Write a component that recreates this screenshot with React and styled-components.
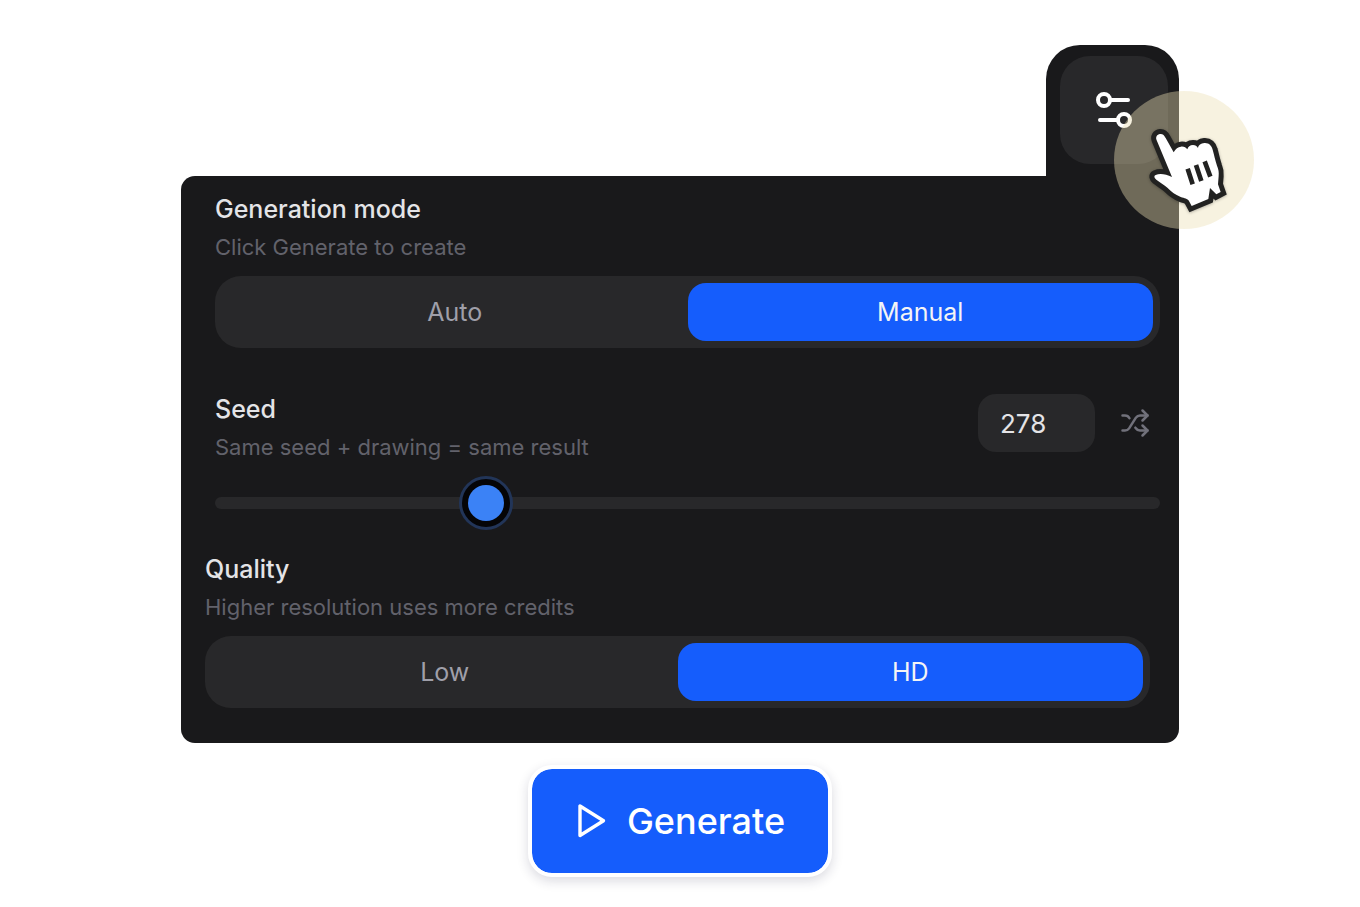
import React, { useState } from 'react';
import styled, { createGlobalStyle } from 'styled-components';
import { Shuffle } from 'lucide-react';

const GlobalStyle = createGlobalStyle`
  :root {
    --panel: #19191b;
    --field: #28282a;
    --blue: #155dfc;
    --text: #e4e4e7;
    --text-soft: #9f9fa9;
    --text-dim: #62626b;
  }
  *, *::before, *::after {
    box-sizing: border-box;
  }
  body {
    margin: 0;
    background: #fff;
    font-family: Inter, 'Liberation Sans', sans-serif;
  }
  button, input {
    font-family: inherit;
  }
`;

const PageStyles = styled.main`
  display: flex;
  flex-direction: column;
  align-items: center;
  padding: 45px 24px 30px;
`;

const SettingsStyles = styled.div`
  display: flex;
  flex-direction: column;
  width: 100%;
  max-width: 998px;
`;

const SettingsTab = styled.div`
  position: relative;
  z-index: 1;
  align-self: flex-end;
  padding: 11px 11px 12px 14px;
  border-radius: 34px 34px 0 0;
  background: var(--panel);
`;

const TabButton = styled.button`
  display: flex;
  align-items: center;
  justify-content: center;
  width: 108px;
  height: 108px;
  padding: 0;
  border: none;
  border-radius: 30px;
  background: var(--field);
  color: #fff;
  cursor: pointer;
`;

// sits over the tab, the panel and the page
const Pointer = styled.svg`
  position: absolute;
  top: 46px;
  left: 68px;
  width: 140px;
  height: 138px;
  pointer-events: none;
  overflow: visible;
  .hand {
    filter: drop-shadow(0 2px 5px rgba(0, 0, 0, 0.3));
  }
`;

const Panel = styled.section`
  display: flex;
  flex-direction: column;
  padding: 16px 19px 35px 34px;
  border-radius: 14px 0 14px 14px;
  background: var(--panel);
`;

const Group = styled.div`
  display: flex;
  flex-direction: column;
  gap: 14px;
  min-width: 0;
  margin: ${({ $outset }) => ($outset ? '0 10px 0 -10px' : '0')};
  padding-bottom: ${({ $space = 0 }) => $space}px;
`;

const Heading = styled.div`
  display: flex;
  flex-direction: column;
  gap: 6px;
  flex: 1;
`;

const Title = styled.span`
  font-size: 25px;
  font-weight: 500;
  line-height: 34px;
  color: var(--text);
`;

const Hint = styled.span`
  font-size: 22px;
  line-height: 30px;
  color: var(--text-dim);
`;

const Segments = styled.div`
  display: grid;
  grid-template-columns: 1fr 1fr;
  height: 72px;
  padding: 7px;
  border-radius: 26px;
  background: var(--field);
`;

const Segment = styled.label`
  position: relative;
  display: flex;
  align-items: center;
  justify-content: center;
  border-radius: 18px;
  font-size: 25px;
  color: var(--text-soft);
  cursor: pointer;
  input {
    position: absolute;
    inset: 0;
    margin: 0;
    opacity: 0;
    cursor: pointer;
  }
  &:has(input:checked) {
    background: var(--blue);
    color: #f4f4f5;
  }
`;

const SeedRow = styled.div`
  display: flex;
  align-items: flex-start;
`;

const SeedControls = styled.div`
  display: flex;
  gap: 15px;
  padding-top: 2px;
`;

const SeedInput = styled.input`
  width: 117px;
  height: 58px;
  padding: 0 22px;
  border: none;
  border-radius: 18px;
  background: var(--field);
  color: var(--text);
  font-size: 26px;
`;

const ShuffleButton = styled.button`
  display: flex;
  align-items: center;
  justify-content: center;
  width: 50px;
  height: 58px;
  padding: 0;
  border: none;
  background: transparent;
  color: #71717b;
  cursor: pointer;
`;

const Slider = styled.input`
  appearance: none;
  width: 100%;
  height: 54px;
  margin: 0;
  background: transparent;
  cursor: pointer;
  &::-webkit-slider-runnable-track {
    height: 12px;
    border-radius: 6px;
    background: var(--field);
  }
  &::-webkit-slider-thumb {
    appearance: none;
    width: 36px;
    height: 36px;
    margin-top: -12px;
    border-radius: 50%;
    background: #3b82f6;
    box-shadow: 0 0 0 6px #050507, 0 0 0 9px #223558;
  }
`;

const GenerateButton = styled.button`
  display: flex;
  align-items: center;
  justify-content: center;
  gap: 20px;
  height: 112px;
  margin-top: 22px;
  padding: 0 43px;
  border: 4px solid #fff;
  border-radius: 24px;
  background: var(--blue);
  background-clip: padding-box;
  box-shadow: 0 4px 12px rgba(24, 24, 60, 0.16);
  color: #fff;
  font-size: 36px;
  font-weight: 500;
  cursor: pointer;
`;

function SlidersIcon() {
  return (
    <svg
      width="40"
      height="40"
      viewBox="0 0 40 40"
      fill="none"
      stroke="currentColor"
      strokeWidth="4"
      strokeLinecap="round"
      aria-hidden="true"
    >
      <circle cx="10" cy="10" r="6" />
      <path d="M17 10h17M6 30h17" />
      <circle cx="30" cy="30" r="6" />
    </svg>
  );
}

function PlayIcon() {
  return (
    <svg
      width="32"
      height="40"
      viewBox="0 0 32 40"
      fill="none"
      stroke="currentColor"
      strokeWidth="3.4"
      strokeLinejoin="round"
      aria-hidden="true"
    >
      <path d="M5 5v29.5L28.5 19.7z" />
    </svg>
  );
}

function HandPointer() {
  return (
    <Pointer viewBox="0 0 140 138" aria-hidden="true">
      <ellipse cx="70" cy="69" rx="70" ry="69" fill="#ecdfb4" opacity="0.41" />
      <g className="hand" transform="translate(26 29) scale(0.33333)">
        <path
          d="M50 61C46 51 51 43 60 42C68 41 73 46 77 54L101 97C107 86 114 81 123 80C132 79 138 83 142 88C144 80 150 75 159 75C166 75 171 78 174 84C175 75 183 70 193 69C207 68 215 77 218 89C222 103 226 122 231 137C236 149 237 157 236 168L234 193L242 216L229 223L210 204L205 237L155 258L147 243C142 235 134 235 122 231C105 224 93 214 83 204C72 193 60 188 49 179C42 173 41 168 47 165C61 159 78 163 96 171Z"
          fill="#fff"
          stroke="#222221"
          strokeWidth="30"
          strokeMiterlimit="3"
          paintOrder="stroke"
        />
        <path
          d="M143 146L158 193M168 135L184 183M194 124L211 170"
          stroke="#222221"
          strokeWidth="14"
        />
      </g>
    </Pointer>
  );
}

function SegmentedControl({ name, label, options, value, onChange }) {
  return (
    <Segments role="radiogroup" aria-label={label}>
      {options.map((option) => (
        <Segment key={option}>
          <input
            type="radio"
            name={name}
            value={option}
            checked={value === option}
            onChange={() => onChange(option)}
          />
          {option}
        </Segment>
      ))}
    </Segments>
  );
}

// generation settings with the generate button below
export default function App() {
  const [mode, setMode] = useState('Manual');
  const [quality, setQuality] = useState('HD');
  const [seed, setSeed] = useState(278);

  const handleSeed = (e) => {
    setSeed(Number(e.target.value) || 0);
  };

  return (
    <>
      <GlobalStyle />
      <PageStyles>
        <SettingsStyles>
          <SettingsTab>
            <TabButton type="button" aria-label="Settings">
              <SlidersIcon />
            </TabButton>
            <HandPointer />
          </SettingsTab>
          <Panel>
            <Group $space={44}>
              <Heading>
                <Title>Generation mode</Title>
                <Hint>Click Generate to create</Hint>
              </Heading>
              <SegmentedControl
                name="mode"
                label="Generation mode"
                options={['Auto', 'Manual']}
                value={mode}
                onChange={setMode}
              />
            </Group>
            <Group $space={22}>
              <SeedRow>
                <Heading>
                  <Title as="label" htmlFor="seed">
                    Seed
                  </Title>
                  <Hint>Same seed + drawing = same result</Hint>
                </Heading>
                <SeedControls>
                  <SeedInput
                    id="seed"
                    type="text"
                    inputMode="numeric"
                    value={seed}
                    onChange={handleSeed}
                  />
                  <ShuffleButton
                    type="button"
                    aria-label="Random seed"
                    onClick={() => setSeed(Math.floor(Math.random() * 1000))}
                  >
                    <Shuffle size={30} />
                  </ShuffleButton>
                </SeedControls>
              </SeedRow>
              <Slider
                type="range"
                min="0"
                max="1000"
                aria-label="Seed"
                value={seed}
                onChange={handleSeed}
              />
            </Group>
            <Group $outset>
              <Heading>
                <Title>Quality</Title>
                <Hint>Higher resolution uses more credits</Hint>
              </Heading>
              <SegmentedControl
                name="quality"
                label="Quality"
                options={['Low', 'HD']}
                value={quality}
                onChange={setQuality}
              />
            </Group>
          </Panel>
        </SettingsStyles>
        <GenerateButton type="button">
          <PlayIcon />
          Generate
        </GenerateButton>
      </PageStyles>
    </>
  );
}
